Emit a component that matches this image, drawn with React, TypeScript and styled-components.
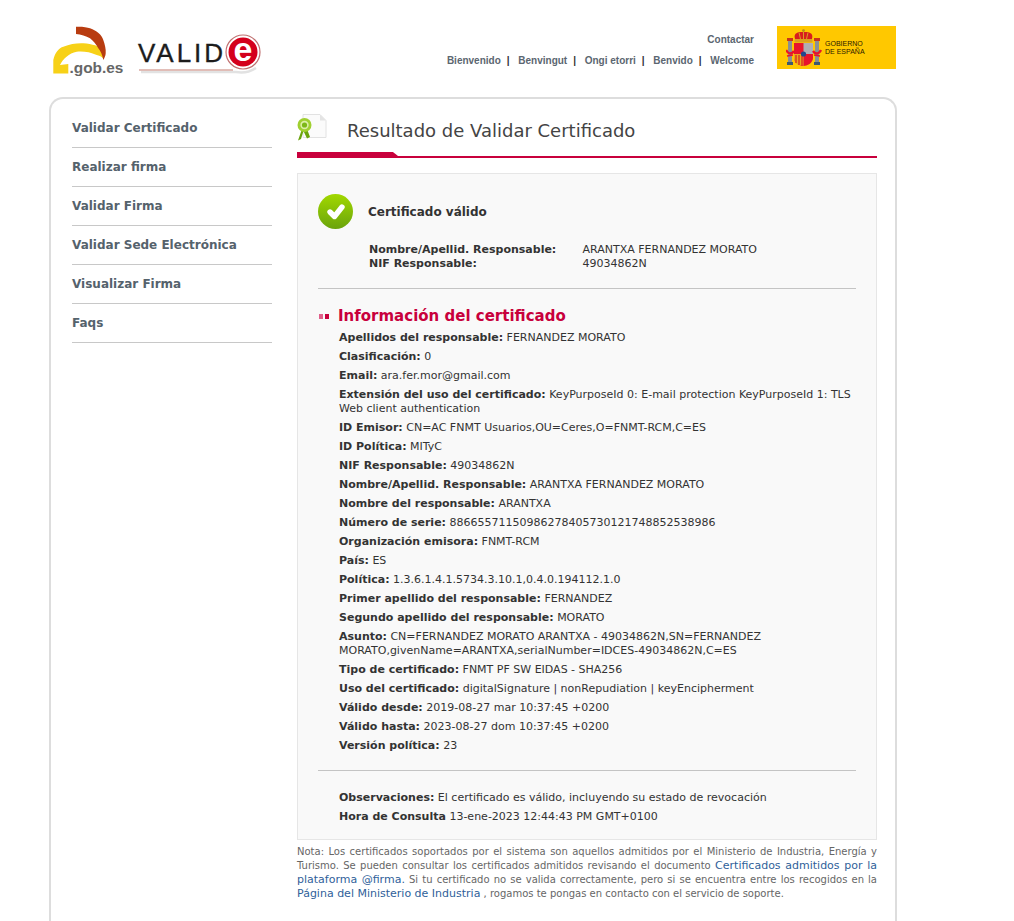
import React from "react";
import styled, { createGlobalStyle } from "styled-components";

const GlobalStyle = createGlobalStyle`
  html, body {
    margin: 0;
    padding: 0;
    background: #fff;
    height: 921px;
    overflow: hidden;
  }
  body {
    font-family: "DejaVu Sans", sans-serif;
    font-size: 11px;
    color: #333;
  }
`;

const Page = styled.div`
  width: 848px;
  margin-left: 49px;
`;

const Header = styled.header`
  height: 97px;
  display: flex;
  align-items: flex-start;
`;

const Logos = styled.div`
  display: flex;
  align-items: flex-start;
  gap: 12px;
  padding: 22px 0 0 3px;
`;

const HeaderRight = styled.div`
  margin-left: auto;
  display: flex;
  align-items: flex-start;
  padding-top: 26px;
`;

const HeaderLinks = styled.div`
  display: flex;
  flex-direction: column;
  align-items: flex-end;
  gap: 9px;
  margin-right: 23px;
  font-family: "Liberation Sans", Arial, sans-serif;
  font-size: 10px;
  font-weight: bold;
  color: #5b6670;
  line-height: 12px;
  padding-top: 8px;
`;

const Greetings = styled.div`
  display: flex;
`;

const Greeting = styled.span`
  &:not(:last-child)::after {
    content: "|";
    color: #333;
    margin: 0 8.7px 0 6px;
  }
`;

const GovBadge = styled.div`
  width: 119px;
  height: 43px;
  margin-right: 1px;
  background: #ffc800;
  display: flex;
  align-items: center;
  gap: 3px;
  padding-left: 9px;
  box-sizing: border-box;
`;

const GovText = styled.div`
  font-family: "Liberation Sans", Arial, sans-serif;
  font-size: 7px;
  line-height: 8px;
  color: #2a2000;
`;

const Panel = styled.div`
  height: 900px;
  box-sizing: border-box;
  border: 2px solid #ddd;
  border-bottom: 0;
  border-radius: 14px 14px 0 0;
  display: flex;
  padding: 10px 18px 0 21px;
`;

const Side = styled.nav`
  width: 200px;
  margin-right: 25px;
  flex: none;
`;

const SideItem = styled.div`
  border-bottom: 1px solid #c8c8c8;
  font-size: 12px;
  font-weight: bold;
  line-height: 15px;
  padding: 12px 0 11px;
  color: #55626c;
`;

const Main = styled.main`
  width: 580px;
  flex: none;
  padding-top: 5px;
`;

const TitleRow = styled.div`
  height: 35px;
  display: flex;
  align-items: flex-start;
`;

const Title = styled.h1`
  margin: 5px 0 0 20px;
  font-size: 18px;
  font-weight: normal;
  line-height: 24px;
  color: #444;
`;

const TitleRule = styled.div`
  position: relative;
  height: 2px;
  margin-top: 7px;
  background: #c8003c;
  &::before {
    content: "";
    position: absolute;
    left: 0;
    bottom: 2px;
    width: 101px;
    height: 4px;
    background: #c8003c;
    clip-path: polygon(0 0, 95% 0, 100% 100%, 0 100%);
  }
`;

const ResultBox = styled.section`
  margin-top: 15px;
  box-sizing: border-box;
  height: 667px;
  border: 1px solid #e6e6e6;
  background: #f9f9f9;
  padding: 20px 20px 0;
`;

const Status = styled.div`
  display: flex;
  align-items: center;
  gap: 15px;
  height: 35px;
`;

const StatusLabel = styled.strong`
  font-size: 12px;
  color: #333;
`;

const Summary = styled.div`
  display: grid;
  grid-template-columns: 213.5px 1fr;
  margin: 14px 0 0 51px;
  line-height: 14px;
  font-size: 11px;
  padding-bottom: 17px;
`;

const SummaryKey = styled.strong`
  font-weight: bold;
`;

const Divider = styled.div`
  height: 1px;
  background: #c4c4c4;
`;

const InfoHeading = styled.h2`
  display: flex;
  align-items: center;
  margin: 17px 0 0;
  font-size: 15px;
  line-height: 20px;
  font-weight: bold;
  color: #c8003c;
`;

const Bullet = styled.span<{ $light?: boolean }>`
  width: 4px;
  height: 5px;
  margin-top: 1px;
  background: ${(p) => (p.$light ? "#e0608a" : "#c8003c")};
  margin-left: ${(p) => (p.$light ? "1px" : "2px")};
  margin-right: ${(p) => (p.$light ? "0" : "9px")};
`;

const Fields = styled.div`
  margin: 5px 0 0 21px;
  height: 439px;
`;

const Field = styled.div`
  line-height: 14px;
  margin-bottom: 5px;
  width: 517px;
`;

const Key = styled.strong`
  font-weight: bold;
  color: #333;
`;

const Notes = styled.div`
  margin: 20px 0 0 21px;
`;

const Footnote = styled.p`
  margin: 5px 0 0;
  font-size: 10px;
  line-height: 14px;
  color: #666;
  text-align: justify;
`;

const FootLink = styled.a`
  font-size: 11px;
  color: #2f5f9a;
`;

const fields: [string, string][] = [
  ["Apellidos del responsable:", "FERNANDEZ MORATO"],
  ["Clasificación:", "0"],
  ["Email:", "ara.fer.mor@gmail.com"],
  ["Extensión del uso del certificado:", "KeyPurposeId 0: E-mail protection KeyPurposeId 1: TLS Web client authentication"],
  ["ID Emisor:", "CN=AC FNMT Usuarios,OU=Ceres,O=FNMT-RCM,C=ES"],
  ["ID Política:", "MITyC"],
  ["NIF Responsable:", "49034862N"],
  ["Nombre/Apellid. Responsable:", "ARANTXA FERNANDEZ MORATO"],
  ["Nombre del responsable:", "ARANTXA"],
  ["Número de serie:", "88665571150986278405730121748852538986"],
  ["Organización emisora:", "FNMT-RCM"],
  ["País:", "ES"],
  ["Política:", "1.3.6.1.4.1.5734.3.10.1,0.4.0.194112.1.0"],
  ["Primer apellido del responsable:", "FERNANDEZ"],
  ["Segundo apellido del responsable:", "MORATO"],
  ["Asunto:", "CN=FERNANDEZ MORATO ARANTXA - 49034862N,SN=FERNANDEZ MORATO,givenName=ARANTXA,serialNumber=IDCES-49034862N,C=ES"],
  ["Tipo de certificado:", "FNMT PF SW EIDAS - SHA256"],
  ["Uso del certificado:", "digitalSignature | nonRepudiation | keyEncipherment"],
  ["Válido desde:", "2019-08-27 mar 10:37:45 +0200"],
  ["Válido hasta:", "2023-08-27 dom 10:37:45 +0200"],
  ["Versión política:", "23"],
];

const notes: [string, string][] = [
  ["Observaciones:", "El certificado es válido, incluyendo su estado de revocación"],
  ["Hora de Consulta", "13-ene-2023 12:44:43 PM GMT+0100"],
];

const menu = ["Validar Certificado", "Realizar firma", "Validar Firma", "Validar Sede Electrónica", "Visualizar Firma", "Faqs"];
const greetings = ["Bienvenido", "Benvingut", "Ongi etorri", "Benvido", "Welcome"];

const GobLogo = () => (
  <svg width="72" height="54" viewBox="0 0 72 54">
    <path d="M1.3 51.5 V38 C3 30 7 26 11.3 24.7 C18 22 25 21 31.3 21.3 C40 22 48 24 49.7 28 L51.3 36.3 C49 34 47 33.5 44.7 33 C38 30 31 29 24.7 29.7 C17 31 11 37 8 43 L16.3 42 V51.5 Z" fill="#f7d117" />
    <path d="M24 4.7 C30 4.5 35 5 38 6.3 C45 9 50 13 51.3 18 C53 23 54 27 53.7 31.3 C53.5 34 52.5 36 51.3 38 C50.5 33 48.5 29 46.3 26.3 C44 22 41 18.5 38 16.3 C34 14 29 12.5 24 12 Z" fill="#b83c10" />
    <text x="17.5" y="51" fontFamily="Liberation Sans, sans-serif" fontSize="15.4" fontWeight="bold" fill="#666">.gob.es</text>
  </svg>
);

const ValideLogo = () => (
  <svg width="130" height="54" viewBox="0 0 130 54">
    <path d="M5 50 H100 C106 51 114 50 120 46" stroke="#e2e2e2" strokeWidth="2.5" fill="none" />
    <path d="M3 48 H97" stroke="#d8a8a0" strokeWidth="1.4" />
    <text x="2" y="40" fontFamily="Liberation Sans, sans-serif" fontSize="26" fill="#1c1c1c" stroke="#1c1c1c" strokeWidth="0.35" textLength="85">VALID</text>
    <circle cx="107" cy="30" r="17" fill="#fff" stroke="#c07070" strokeWidth="1.2" />
    <circle cx="107" cy="30" r="14.5" fill="#d4001c" />
    <text x="107" y="39" textAnchor="middle" fontFamily="Liberation Sans, sans-serif" fontSize="34" fontWeight="bold" fill="#fff">e</text>
  </svg>
);

const Crest = () => (
  <svg width="36" height="38" viewBox="0 0 36 38">
    <rect x="2" y="12" width="4" height="21" fill="#8a8f94" />
    <rect x="29" y="12" width="4" height="21" fill="#8a8f94" />
    <rect x="1" y="33" width="6" height="3" fill="#3f5a6e" />
    <rect x="28" y="33" width="6" height="3" fill="#3f5a6e" />
    <rect x="1" y="9" width="6" height="3" fill="#c8341c" />
    <rect x="28" y="9" width="6" height="3" fill="#c8341c" />
    <path d="M9 10 C7 3 13 3 17.5 3 C22 3 28 3 26 10 V13 H9 Z" fill="#d81e1e" />
    <path d="M9 10.5 H26 V13 H9 Z M13 3.5 L14.5 10 M22 3.5 L20.5 10 M17.5 3 V10" stroke="#d9a020" strokeWidth="1" fill="#d9a020" />
    <circle cx="17.5" cy="1.6" r="1.4" fill="#b88a18" />
    <path d="M8 14 H27 V29 C27 34 21 37 17.5 37 C14 37 8 34 8 29 Z" fill="#e8142c" />
    <rect x="17.5" y="14" width="9.5" height="11" fill="#b0adb4" />
    <path d="M8 25 H17.5 V37 C13 37 8 34 8 29 Z" fill="#e8a820" />
    <path d="M10 26 V34 M13 26 V36 M16 26 V37" stroke="#d81e1e" strokeWidth="1.2" />
    <circle cx="17.5" cy="25" r="2.6" fill="#24478c" />
    <path d="M0 21 C3 26 6 25 8 22 M35 21 C32 26 29 25 27 22" stroke="#e8142c" strokeWidth="2.4" fill="none" />
    <path d="M1 27 L7 26 M34 27 L28 26" stroke="#e8142c" strokeWidth="1.6" />
  </svg>
);

const CertIcon = () => (
  <svg width="30" height="27" viewBox="0 0 30 27">
    <path d="M6 0.5 H23 L29 6.5 V23.5 H6 Z" fill="#fbfbfb" stroke="#e2e2e2" />
    <path d="M23 0.5 V6.5 H29 Z" fill="#e4e4e4" />
    <path d="M5 15 L1 26.5 L4 25 L6.5 17 L10 24.5 L13 23 L10 15 Z" fill="#6aa40c" />
    <circle cx="7.5" cy="11" r="7" fill="#a0d030" />
    <circle cx="7.5" cy="11" r="4.2" fill="#dcefa8" />
    <circle cx="7.5" cy="11" r="2.6" fill="#7cb818" />
  </svg>
);

const CheckIcon = () => (
  <svg width="35" height="35" viewBox="0 0 35 35">
    <defs>
      <linearGradient id="okGrad" x1="0" y1="0" x2="0" y2="1">
        <stop offset="0" stopColor="#a2d800" />
        <stop offset="1" stopColor="#6aa40c" />
      </linearGradient>
    </defs>
    <circle cx="17.5" cy="17.5" r="17.5" fill="url(#okGrad)" />
    <path d="M12 18 L16.5 22.5 L24 13" fill="none" stroke="#fff" strokeWidth="5.4" strokeLinecap="round" strokeLinejoin="round" />
  </svg>
);

export default function App() {
  return (
    <>
      <GlobalStyle />
      <Page>
        <Header>
          <Logos>
            <GobLogo />
            <ValideLogo />
          </Logos>
          <HeaderRight>
            <HeaderLinks>
              <span>Contactar</span>
              <Greetings>
                {greetings.map((g) => (
                  <Greeting key={g}>{g}</Greeting>
                ))}
              </Greetings>
            </HeaderLinks>
            <GovBadge>
              <Crest />
              <GovText>
                GOBIERNO
                <br />
                DE ESPAÑA
              </GovText>
            </GovBadge>
          </HeaderRight>
        </Header>
        <Panel>
          <Side>
            {menu.map((m) => (
              <SideItem key={m}>{m}</SideItem>
            ))}
          </Side>
          <Main>
            <TitleRow>
              <CertIcon />
              <Title>Resultado de Validar Certificado</Title>
            </TitleRow>
            <TitleRule />
            <ResultBox>
              <Status>
                <CheckIcon />
                <StatusLabel>Certificado válido</StatusLabel>
              </Status>
              <Summary>
                <SummaryKey>Nombre/Apellid. Responsable:</SummaryKey>
                <span>ARANTXA FERNANDEZ MORATO</span>
                <SummaryKey>NIF Responsable:</SummaryKey>
                <span>49034862N</span>
              </Summary>
              <Divider />
              <InfoHeading>
                <Bullet $light />
                <Bullet />
                Información del certificado
              </InfoHeading>
              <Fields>
                {fields.map(([k, v]) => (
                  <Field key={k}>
                    <Key>{k}</Key> {v}
                  </Field>
                ))}
              </Fields>
              <Divider />
              <Notes>
                {notes.map(([k, v]) => (
                  <Field key={k}>
                    <Key>{k}</Key> {v}
                  </Field>
                ))}
              </Notes>
            </ResultBox>
            <Footnote>
              Nota: Los certificados soportados por el sistema son aquellos admitidos por el Ministerio de Industria, Energía y Turismo. Se pueden consultar los certificados admitidos revisando el documento{" "}
              <FootLink>Certificados admitidos por la plataforma @firma.</FootLink> Si tu certificado no se valida correctamente, pero si se encuentra entre los recogidos en la{" "}
              <FootLink>Página del Ministerio de Industria</FootLink> , rogamos te pongas en contacto con el servicio de soporte.
            </Footnote>
          </Main>
        </Panel>
      </Page>
    </>
  );
}
